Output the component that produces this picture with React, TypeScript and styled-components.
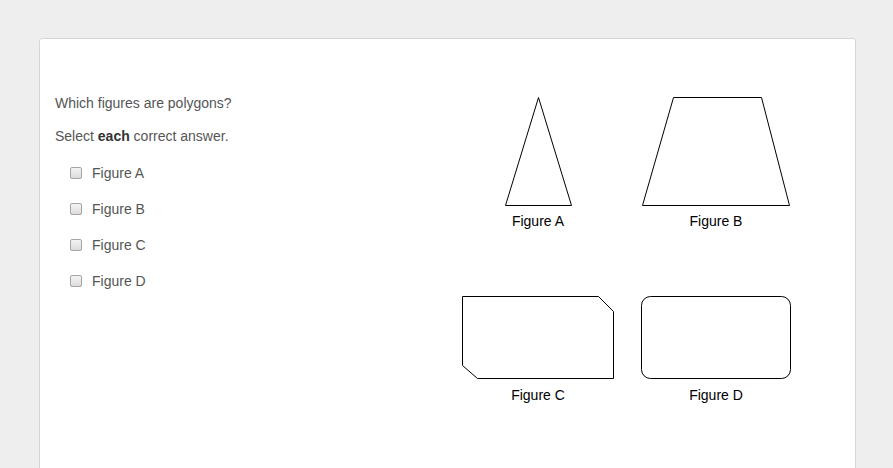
import React from 'react';
import styled, { createGlobalStyle } from 'styled-components';

const GlobalStyle = createGlobalStyle`
  html, body {
    margin: 0;
    padding: 0;
    background: #eeeeee;
    font-family: "Liberation Sans", Arial, sans-serif;
  }
`;

type Figure = {
  name: string;
  height: number;
  shape: React.ReactNode;
};

const topRow: Figure[] = [
  {
    name: 'Figure A',
    height: 113,
    shape: <polygon points="89.5,2.5 122.5,110.5 56.5,110.5" />,
  },
  {
    name: 'Figure B',
    height: 113,
    shape: <polygon points="46.5,2.5 134.5,2.5 162.5,110.5 15.5,110.5" />,
  },
];

const bottomRow: Figure[] = [
  {
    name: 'Figure C',
    height: 88,
    shape: <polygon points="13.5,2.5 149.5,2.5 164.5,17.5 164.5,84.5 28.5,84.5 13.5,71.5" />,
  },
  {
    name: 'Figure D',
    height: 88,
    shape: <rect x="14.5" y="2.5" width="149" height="82" rx="9" />,
  },
];

const options = ['Figure A', 'Figure B', 'Figure C', 'Figure D'];

const App: React.FC = () => {
  return (
    <>
      <GlobalStyle />
      <Page>
        <Card>
          <Question>
            <Prompt>Which figures are polygons?</Prompt>
            <Prompt>
              Select <b>each</b> correct answer.
            </Prompt>
            <Options>
              {options.map(opt => (
                <Option key={opt}>
                  <Box type="checkbox" />
                  <span>{opt}</span>
                </Option>
              ))}
            </Options>
          </Question>
          <Figures>
            {[...topRow, ...bottomRow].map(fig => (
              <FigureCell key={fig.name}>
                <svg width="178" height={fig.height} viewBox={`0 0 178 ${fig.height}`}>
                  <g fill="none" stroke="#000" strokeWidth="1">
                    {fig.shape}
                  </g>
                </svg>
                <Caption>{fig.name}</Caption>
              </FigureCell>
            ))}
          </Figures>
        </Card>
      </Page>
    </>
  );
};

const Page = styled.div`
  padding: 38px 37px 0 39px;
  height: 468px;
  box-sizing: border-box;
  overflow: hidden;
`;

const Card = styled.div`
  background: #fff;
  border: 1px solid #d6d6d6;
  border-radius: 3px;
  min-height: 480px;
  padding: 56px 15px 0 15px;
  display: grid;
  grid-template-columns: 394px 356px;
  align-items: start;
`;

const Question = styled.div`
  display: flex;
  flex-direction: column;
  color: #555;
  font-size: 14px;
`;

const Prompt = styled.p`
  margin: 0 0 17px;
  line-height: 16px;

  b {
    color: #333;
  }
`;

const Options = styled.div`
  display: flex;
  flex-direction: column;
  gap: 20px;
  padding-left: 15px;
  margin-top: 4px;
`;

const Option = styled.label`
  display: flex;
  align-items: center;
  gap: 10px;
  line-height: 16px;
  font-size: 14px;
  color: #555;
`;

const Box = styled.input`
  appearance: none;
  margin: 0;
  width: 12px;
  height: 12px;
  border: 1px solid #a5a5a5;
  border-radius: 2px;
  background: linear-gradient(#f4f4f4, #dcdcdc);
  box-sizing: border-box;
`;

const Figures = styled.div`
  display: grid;
  grid-template-columns: 178px 178px;
  row-gap: 65px;
`;

const FigureCell = styled.div`
  display: flex;
  flex-direction: column;
  align-items: center;

  svg {
    display: block;
  }
`;

const Caption = styled.div`
  margin-top: 5px;
  font-size: 14px;
  line-height: 16px;
  color: #000;
`;

export default App;
